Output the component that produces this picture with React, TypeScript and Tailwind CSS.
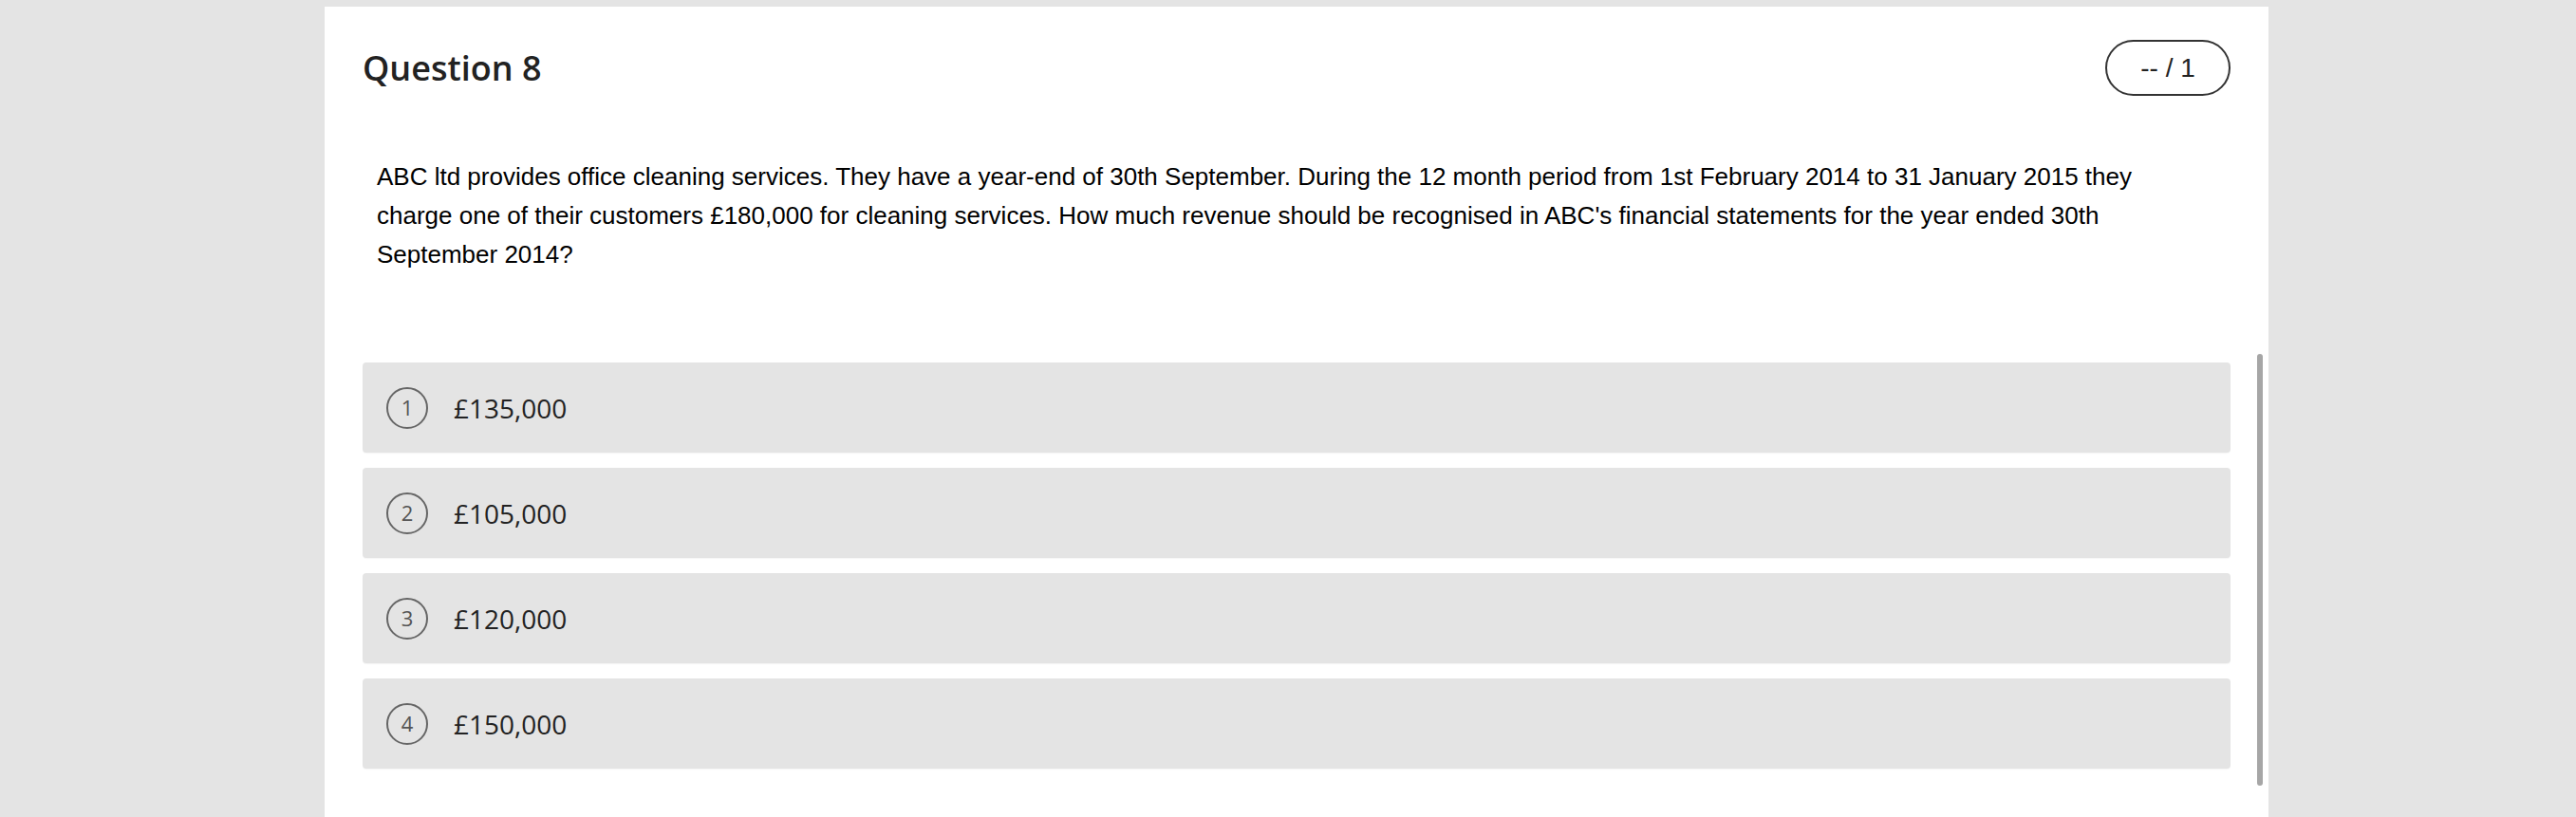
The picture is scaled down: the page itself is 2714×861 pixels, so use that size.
const options = [
    { n: 1, label: '£135,000' },
    { n: 2, label: '£105,000' },
    { n: 3, label: '£120,000' },
    { n: 4, label: '£150,000' },
];

const App = () => {
    return (
        <div className="h-[861px] overflow-hidden bg-[#e4e4e4] pt-[7px] pl-[342px]">
            <div className="relative h-[854px] w-[2048px] bg-white px-[40px]">
                {/* Header */}
                <div className="flex items-center justify-between pt-[35px]">
                    <h1 className="font-['Open_Sans',sans-serif] text-[36px] font-semibold leading-none text-[#222]">
                        Question 8
                    </h1>
                    <div className="flex h-[59px] w-[132px] items-center justify-center rounded-full border-2 border-[#333] font-['Liberation_Sans',Arial,sans-serif] text-[28px] text-[#222]">
                        -- / 1
                    </div>
                </div>

                {/* Question text */}
                <p className="mt-[65px] pl-[15px] pr-[50px] font-['Liberation_Sans',Arial,sans-serif] text-[26px] leading-[41px] text-black">
                    ABC ltd provides office cleaning services. They have a year-end of 30th September. During the 12 month period from 1st February 2014 to 31 January 2015 they charge one of their customers £180,000 for cleaning services. How much revenue should be recognised in ABC's financial statements for the year ended 30th September 2014?
                </p>

                {/* Options */}
                <div className="mt-[93px] flex flex-col gap-[16px]">
                    {options.map((opt) => (
                        <div
                            key={opt.n}
                            className="flex h-[95px] items-center gap-[27px] rounded-[4px] bg-[#e4e4e4] pl-[25px] shadow-[0_1px_1px_rgba(0,0,0,0.04)]"
                        >
                            <div className="flex h-[44px] w-[44px] items-center justify-center rounded-full border-2 border-[#666] font-['Open_Sans',sans-serif] text-[22px] text-[#555]">
                                {opt.n}
                            </div>
                            <span className="font-['Open_Sans',sans-serif] text-[28px] text-[#222]">{opt.label}</span>
                        </div>
                    ))}
                </div>

                {/* Scrollbar thumb */}
                <div className="absolute right-[6px] top-[366px] h-[455px] w-[6px] rounded-full bg-[#a6a6a6]"></div>
            </div>
        </div>
    );
};

export default App;
